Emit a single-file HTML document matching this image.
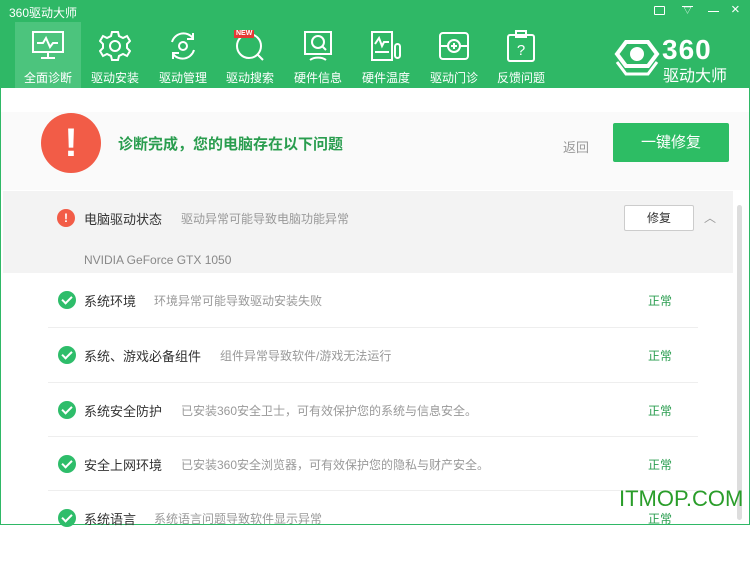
<!DOCTYPE html>
<html><head><meta charset="utf-8"><style>
*{margin:0;padding:0;box-sizing:border-box}
body{width:750px;height:525px;overflow:hidden;font-family:"Liberation Sans","Noto Sans CJK SC",sans-serif;background:#fff;position:relative}
.hd{position:absolute;left:0;top:0;width:750px;height:88px;background:#2fb866}
.title{position:absolute;left:9px;top:4px;color:#fff;font-size:12px}
.tab{position:absolute;top:22px;width:66px;height:66px;color:#fff;font-size:12px;text-align:center}
.tab.on{background:#4cc47d}
.tab svg{position:absolute;left:17px;top:8px}
.tab span{position:absolute;left:0;right:0;top:47px}
.frame{position:absolute;top:88px;bottom:0;left:0;right:0;border-left:1px solid #2fb866;border-right:1px solid #2fb866;border-bottom:1px solid #2fb866}
.ban{position:absolute;left:1px;top:112px;width:748px;height:78px;background:#fafafa}
.row{position:absolute;left:48px;width:650px;height:55px;border-bottom:1px solid #eee;font-size:13px}
.ok{position:absolute;left:10px;top:-9px;width:18px;height:18px;border-radius:50%;background:#2ebd6a}
.ok:after{content:"";position:absolute;left:6px;top:3px;width:4px;height:8px;border:solid #fff;border-width:0 2px 2px 0;transform:rotate(45deg)}
.t{position:absolute;left:36px;top:-9px;color:#333}
.d{position:absolute;top:-8px;color:#999;font-size:12px}
.n{position:absolute;left:600px;top:-8px;color:#2a9d4f;font-size:12px}
</style></head><body>
<div class="hd">
<div class="title">360驱动大师</div>
<div style="position:absolute;left:654px;top:6px;width:11px;height:9px;border:1px solid #fff;border-radius:1px"></div>
<div style="position:absolute;left:682px;top:6px;width:11px;height:9px;border-top:1px solid #fff;color:#fff;font-size:8px;line-height:7px;text-align:center">▽</div>
<div style="position:absolute;left:708px;top:11px;width:11px;height:1px;background:#fff"></div>
<div style="position:absolute;left:731px;top:1px;color:#fff;font-size:15px">×</div>
<div class="tab on" style="left:15px"><svg width="32" height="32" fill="none" stroke="#fff" stroke-width="2"><rect x="1" y="2" width="30" height="20"/><path d="M5 13h6l3-5 4 9 3-4h5M16 22v5M9 28h14"/></svg><span>全面诊断</span></div>
<div class="tab" style="left:82px"><svg width="32" height="32" fill="none" stroke="#fff" stroke-width="2"><path d="M13 2h6l1 4 4 2 4-2 3 5-3 3v4l3 3-3 5-4-2-4 2-1 4h-6l-1-4-4-2-4 2-3-5 3-3v-4l-3-3 3-5 4 2 4-2z"/><circle cx="16" cy="16" r="5"/></svg><span>驱动安装</span></div>
<div class="tab" style="left:150px"><svg width="32" height="32" fill="none" stroke="#fff" stroke-width="2"><path d="M5 12a12 12 0 0 1 21-4M27 20a12 12 0 0 1-21 4M26 3v6h-6M6 29v-6h6"/><circle cx="16" cy="16" r="4"/></svg><span>驱动管理</span></div>
<div class="tab" style="left:217px"><svg width="32" height="32" fill="none" stroke="#fff" stroke-width="2"><circle cx="15" cy="16" r="12"/><path d="M24 25l5 5"/></svg><div style="position:absolute;left:17px;top:8px;background:#e53935;color:#fff;font-size:7px;font-weight:bold;padding:0 2px;line-height:8px">NEW</div><span>驱动搜索</span></div>
<div class="tab" style="left:285px"><svg width="32" height="32" fill="none" stroke="#fff" stroke-width="2"><rect x="3" y="2" width="26" height="22"/><circle cx="16" cy="12" r="6"/><path d="M20 16l4 4M8 30a10 6 0 0 1 16 0"/></svg><span>硬件信息</span></div>
<div class="tab" style="left:353px"><svg width="32" height="32" fill="none" stroke="#fff" stroke-width="2"><rect x="2" y="2" width="20" height="28"/><path d="M5 14l4-6 3 8 2-4h5M5 22h14"/><rect x="25" y="14" width="5" height="14" rx="2.5"/></svg><span>硬件温度</span></div>
<div class="tab" style="left:421px"><svg width="32" height="32" fill="none" stroke="#fff" stroke-width="2"><rect x="2" y="3" width="28" height="26" rx="3"/><circle cx="16" cy="16" r="6"/><path d="M16 13v6M13 16h6M2 16h8M22 16h8"/></svg><span>驱动门诊</span></div>
<div class="tab" style="left:488px"><svg width="32" height="32" fill="none" stroke="#fff" stroke-width="2"><rect x="3" y="5" width="26" height="26" rx="2"/><rect x="11" y="1" width="10" height="6"/><text x="16" y="25" fill="#fff" stroke="none" font-size="15" text-anchor="middle" font-family="Liberation Sans">?</text></svg><span>反馈问题</span></div>
<svg style="position:absolute;left:614px;top:38px" width="46" height="42" fill="none" stroke="#fff" stroke-width="4"><path d="M12 4h22l9 12-9 12H12L3 16z"/><path d="M3 24l9 12h22l9-12" stroke-width="3"/><circle cx="23" cy="16" r="5" fill="#fff"/></svg>
<div style="position:absolute;left:662px;top:34px;color:#fff;font-size:28px;font-weight:bold;letter-spacing:1px">360</div>
<div style="position:absolute;left:663px;top:62px;color:#fff;font-size:16px">驱动大师</div>
</div>
<div class="frame"></div>
<div class="ban"></div>
<div style="position:absolute;left:41px;top:113px;width:60px;height:60px;border-radius:50%;background:#f25c47;color:#fff;font-size:40px;font-weight:bold;text-align:center;line-height:60px">!</div>
<div style="position:absolute;left:118px;top:133px;color:#2a9d4f;font-size:15px;font-weight:bold">诊断完成，您的电脑存在以下问题</div>
<div style="position:absolute;left:563px;top:137px;color:#999;font-size:13px">返回</div>
<div style="position:absolute;left:613px;top:123px;width:116px;height:39px;background:#2dbd64;border-radius:2px;color:#fff;font-size:15px;text-align:center;line-height:39px">一键修复</div>
<div style="position:absolute;left:3px;top:191px;width:730px;height:82px;background:#f3f3f3"></div>
<div style="position:absolute;left:57px;top:209px;width:18px;height:18px;border-radius:50%;background:#f25c47;color:#fff;font-size:12px;font-weight:bold;text-align:center;line-height:18px">!</div>
<div style="position:absolute;left:84px;top:209px;color:#333;font-size:13px">电脑驱动状态</div>
<div style="position:absolute;left:181px;top:210px;color:#999;font-size:12px">驱动异常可能导致电脑功能异常</div>
<div style="position:absolute;left:624px;top:205px;width:70px;height:26px;background:#fff;border:1px solid #ccc;border-radius:2px;font-size:12px;text-align:center;line-height:24px;color:#333">修复</div>
<div style="position:absolute;left:704px;top:209px;color:#999;font-size:12px">︿</div>
<div style="position:absolute;left:84px;top:253px;color:#888;font-size:12px">NVIDIA GeForce GTX 1050</div>
<div style="position:absolute;left:737px;top:205px;width:5px;height:315px;background:#ddd;border-radius:3px"></div>
<div class="row" style="top:300px;height:28px"><div class="ok"></div><div class="t">系统环境</div><div class="d" style="left:106px">环境异常可能导致驱动安装失败</div><div class="n">正常</div></div>
<div class="row" style="top:355px;height:28px"><div class="ok"></div><div class="t">系统、游戏必备组件</div><div class="d" style="left:172px">组件异常导致软件/游戏无法运行</div><div class="n">正常</div></div>
<div class="row" style="top:410px;height:27px"><div class="ok"></div><div class="t">系统安全防护</div><div class="d" style="left:133px">已安装360安全卫士，可有效保护您的系统与信息安全。</div><div class="n">正常</div></div>
<div class="row" style="top:464px;height:27px"><div class="ok"></div><div class="t">安全上网环境</div><div class="d" style="left:133px">已安装360安全浏览器，可有效保护您的隐私与财产安全。</div><div class="n">正常</div></div>
<div class="row" style="top:518px;border:none"><div class="ok"></div><div class="t">系统语言</div><div class="d" style="left:106px">系统语言问题导致软件显示异常</div><div class="n">正常</div></div>
<div style="position:absolute;left:619px;top:486px;color:#2a9d2a;font-size:22px">ITMOP.COM</div>
</body></html>
